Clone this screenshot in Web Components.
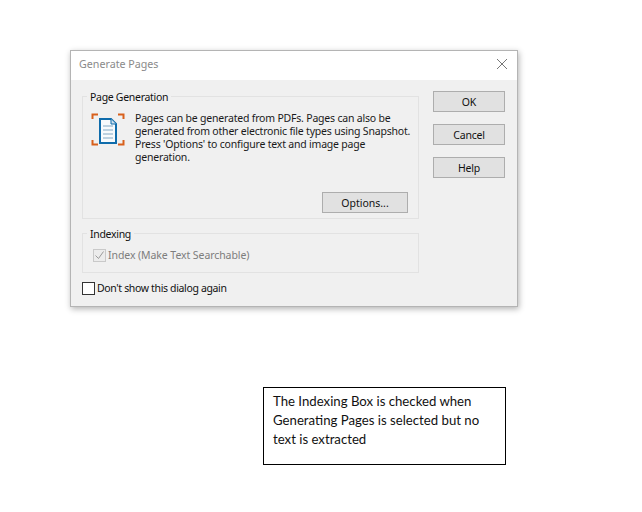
<!DOCTYPE html>
<html><head><meta charset="utf-8">
<style>
html,body{margin:0;background:#fff}
body{width:642px;height:512px;overflow:hidden;padding:50px 0 0 70px;box-sizing:border-box;font:10.5px "Noto Sans",sans-serif;color:#111}
</style></head><body>
<gen-dialog heading="Generate Pages">
  <group-box label="Page Generation" style="height:123px">
    <page-info>Pages can be generated from PDFs. Pages can also be<br>generated from other electronic file types using Snapshot.<br>Press 'Options' to configure text and image page<br>generation.</page-info>
    <div style="display:flex;justify-content:flex-end;margin-top:auto;padding:0 10px 5px 0"><win-button style="width:86px;letter-spacing:0">Options...</win-button></div>
  </group-box>
  <group-box label="Indexing" style="height:40px;margin-top:14px">
    <check-row checked disabled style="margin:7px 0 0 10px;letter-spacing:-.08px">Index (Make Text Searchable)</check-row>
  </group-box>
  <check-row style="margin:8px 0 0 0;letter-spacing:-.35px">Don't show this dialog again</check-row>
  <win-button slot="actions">OK</win-button>
  <win-button slot="actions">Cancel</win-button>
  <win-button slot="actions">Help</win-button>
</gen-dialog>
<note-box>The Indexing Box is checked when Generating Pages is selected but no text is extracted</note-box>
<script>
function def(name, html, init){
  customElements.define(name, class extends HTMLElement{
    constructor(){super();this.attachShadow({mode:"open"}).innerHTML=html;}
    connectedCallback(){init&&init(this,this.shadowRoot);}
  });
}
def("gen-dialog",`<style>
:host{display:block;width:448px;height:257px;box-sizing:border-box;background:#f0f0f0;border:1px solid #b4b4b4;box-shadow:1px 2px 6px rgba(0,0,0,.3)}
.title{height:29px;background:#fff;display:flex;align-items:center;justify-content:space-between;padding:0 9px 3px 8px;box-sizing:border-box;color:#8a8a8a;font-size:10.700px}
.body{display:flex;padding:11px 12px 0 11px;gap:14px}
.main{width:337px;padding-top:5px;display:flex;flex-direction:column}
.side{display:flex;flex-direction:column;gap:12px;width:72px}
svg{display:block}
</style><div class="title"><span id="h"></span><svg width="12" height="12" viewBox="0 0 12 12"><path d="M1 1l10 10M11 1L1 11" stroke="#777" stroke-width="1" fill="none"/></svg></div>
<div class="body"><div class="main"><slot></slot></div><div class="side"><slot name="actions"></slot></div></div>`,
(el,r)=>{r.getElementById("h").textContent=el.getAttribute("heading")});
def("group-box",`<style>
:host{display:flex;flex-direction:column;box-sizing:border-box;border:1px solid #e2e2e2;position:relative;padding-top:7px}
.l{position:absolute;left:4px;top:-7px;background:#f0f0f0;padding:0 3px;line-height:15px;color:#111;letter-spacing:-.3px}
</style><span class="l" id="l"></span><slot></slot>`,
(el,r)=>{r.getElementById("l").textContent=el.getAttribute("label")});
def("page-info",`<style>
:host{display:flex;gap:10px;padding:8px 0 0 8px}
p{margin:0;line-height:13px;color:#1a1a1a;white-space:nowrap;letter-spacing:-.2px}
svg{flex:none;margin-top:1px}
</style><svg width="34" height="33" viewBox="0 0 34 33" fill="none">
<path d="M1.500 6V1.500H7M27 1.500h5.500V6M1.500 27v4.500H7M27 31.500h5.500V27" stroke="#d8601c" stroke-width="2"/>
<path d="M9 6h11l5 5v19H9z" fill="#f7fafc" stroke="#0f6cab" stroke-width="2"/>
<path d="M20 6v5h5" fill="#cfe0ee" stroke="#0f6cab" stroke-width="1"/>
<path d="M12 13h10M12 17h10M12 21h10M12 25h10" stroke="#a9c4d6" stroke-width="1.500"/>
</svg><p><slot></slot></p>`);
def("win-button",`<style>
:host{display:flex;align-items:center;justify-content:center;height:21px;box-sizing:border-box;background:#e1e1e1;border:1px solid #adadad;color:#111;font-size:10.500px;letter-spacing:-.2px}
</style><slot></slot>`);
def("check-row",`<style>
:host{display:flex;align-items:center;gap:2px;height:14px;line-height:14px}
.b{width:11px;height:11px;border:1px solid #333;background:#fff;flex:none;display:block}
:host([disabled]){color:#7d7d7d}
:host([disabled]) .b{border-color:#c9c9c9;background:#ececec}
</style><svg class="b" viewBox="0 0 11 11"><path id="c" d="" fill="none" stroke="#9a9a9a" stroke-width="1"/></svg><span><slot></slot></span>`,
(el,r)=>{if(el.hasAttribute("checked"))r.getElementById("c").setAttribute("d","M1.500 5.500l3 3 5-7")});
def("note-box",`<style>
:host{display:block;width:243px;height:78px;box-sizing:border-box;margin:80px 0 0 193px;border:1px solid #000;background:#fff;padding:4px 9px;font:13.200px/19px Lato,sans-serif;color:#111}
</style><slot></slot>`);
</script>
</body></html>
